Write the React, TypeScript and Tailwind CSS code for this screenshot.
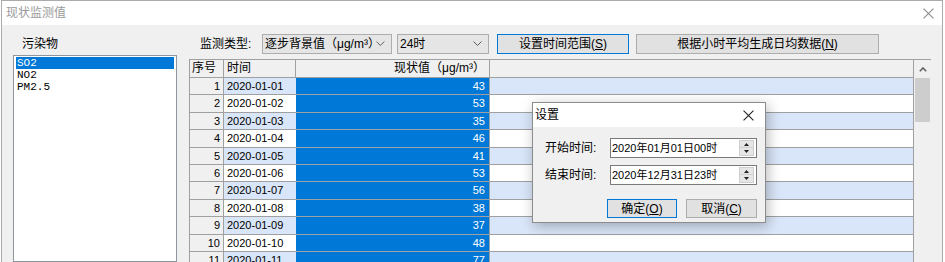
import React from "react";

const sans = "font-['Liberation_Sans','Noto_Sans_CJK_SC',sans-serif]";

const rows = [
    { n: 1, d: "2020-01-01", v: 43 },
    { n: 2, d: "2020-01-02", v: 53 },
    { n: 3, d: "2020-01-03", v: 35 },
    { n: 4, d: "2020-01-04", v: 46 },
    { n: 5, d: "2020-01-05", v: 41 },
    { n: 6, d: "2020-01-06", v: 53 },
    { n: 7, d: "2020-01-07", v: 56 },
    { n: 8, d: "2020-01-08", v: 38 },
    { n: 9, d: "2020-01-09", v: 37 },
    { n: 10, d: "2020-01-10", v: 48 },
    { n: 11, d: "2020-01-11", v: 77 },
];

function CloseX({ color, size }: { color: string; size: number }) {
    return (
        <svg width={size} height={size} viewBox="0 0 10 10">
            <path d="M0.5 0.5 L9.5 9.5 M9.5 0.5 L0.5 9.5" stroke={color} strokeWidth="1" fill="none" />
        </svg>
    );
}

function Chevron() {
    return (
        <svg width="9" height="5" viewBox="0 0 9 5">
            <polyline points="0.5,0.5 4.5,4.5 8.5,0.5" stroke="#5a5a5a" strokeWidth="1" fill="none" />
        </svg>
    );
}

function Combo({ w, text }: { w: string; text: string }) {
    return (
        <div className={`${w} h-[20px] border border-[#adadad] bg-[#e5e5e5] flex items-center justify-between pl-[2px] pr-[6px] text-[12px] leading-[18px]`}>
            <span>{text}</span>
            <Chevron />
        </div>
    );
}

function Spinner() {
    return (
        <div className="w-[15px] h-[16px] flex flex-col mr-[2px]">
            <div className="h-[8px] bg-[#e6e6e6] border border-[#cfcfcf] flex items-center justify-center">
                <svg width="5" height="3" viewBox="0 0 5 3">
                    <polygon points="2.5,0 5,3 0,3" fill="#202020" />
                </svg>
            </div>
            <div className="h-[8px] bg-[#e6e6e6] border border-[#cfcfcf] border-t-0 flex items-center justify-center">
                <svg width="5" height="3" viewBox="0 0 5 3">
                    <polygon points="0,0 5,0 2.5,3" fill="#202020" />
                </svg>
            </div>
        </div>
    );
}

function TimeField({ label, value }: { label: string; value: string }) {
    return (
        <div className="flex items-center h-[20px]">
            <div className="w-[65px] text-[12px] leading-[16px]">{label}</div>
            <div className="w-[147px] h-[20px] border border-[#7a7a7a] bg-white flex items-center justify-between pl-[1px]">
                <span className="text-[11px] leading-[16px]">{value}</span>
                <Spinner />
            </div>
        </div>
    );
}

export default function App() {
    return (
        <div className={`w-[945px] h-[262px] overflow-hidden bg-white relative text-black ${sans}`}>
            <div className="ml-[1px] w-[942px] h-[262px] border-x border-t border-[#ababab] flex flex-col">
                {/* title bar */}
                <div className="h-[24px] bg-white flex items-center justify-between pl-[4px] pr-[8px]">
                    <span className="text-[12px] leading-[16px] text-[#9a9a9a]">现状监测值</span>
                    <CloseX color="#8a8a8a" size={11} />
                </div>

                <div className="flex-1 min-h-0 bg-[#f0f0f0] flex">
                    {/* pollutant list */}
                    <div className="w-[187px] pl-[11px] pt-[11px] flex flex-col">
                        <div className="h-[16px] pl-[9px] text-[12px] leading-[16px]">污染物</div>
                        <div className="mt-[3px] w-[164px] flex-1 border border-[#8f959c] bg-white px-[2px] pt-[1px] font-['Liberation_Mono',monospace] text-[11px] leading-[12px]">
                            <div className="h-[12px] pl-[1px] bg-[#0078d7] text-white">SO2</div>
                            <div className="h-[12px] pl-[1px]">NO2</div>
                            <div className="h-[12px] pl-[1px]">PM2.5</div>
                        </div>
                    </div>

                    {/* main area */}
                    <div className="flex-1 pt-[8px] flex flex-col min-h-0">
                        <div className="h-[21px] flex items-center pl-[11px]">
                            <div className="w-[62px] text-[12px] leading-[16px]">监测类型:</div>
                            <Combo w="w-[130px]" text="逐步背景值（μg/m³）" />
                            <div className="w-[5px]" />
                            <Combo w="w-[92px]" text="24时" />
                            <button className="ml-[8px] w-[132px] h-[20px] border border-[#0078d7] bg-[#e1e1e1] text-[12px] leading-[16px]">
                                设置时间范围(<span className="underline">S</span>)
                            </button>
                            <button className="ml-[7px] w-[243px] h-[20px] border border-[#adadad] bg-[#e1e1e1] text-[12px] leading-[16px]">
                                根据小时平均生成日均数据(<span className="underline">N</span>)
                            </button>
                        </div>

                        <div className="mt-[5px] w-[742px] flex-1 min-h-0 overflow-hidden border-l border-t border-[#a0a0a0] flex">
                            <div className="w-[724px] flex flex-col">
                                <div className="h-[18px] shrink-0 flex bg-[#f0f0f0] border-b border-[#a0a0a0] text-[12px] leading-[16px]">
                                    <div className="w-[34px] border-r border-[#a0a0a0] pl-[2px]">序号</div>
                                    <div className="w-[72px] border-r border-[#a0a0a0] pl-[3px]">时间</div>
                                    <div className="w-[194px] border-r border-[#a0a0a0] text-right pr-[4px]">现状值（μg/m³）</div>
                                    <div className="flex-1 border-r border-[#a0a0a0]" />
                                </div>
                                {rows.map((r, i) => {
                                    const bg = i % 2 === 0 ? "bg-[#d9e5f8]" : "bg-white";
                                    return (
                                        <div key={r.n} className="h-[17.4px] shrink-0 flex border-b border-[#a0a0a0] text-[11px] leading-[16px]">
                                            <div className="w-[34px] bg-[#f0f0f0] border-r border-[#a0a0a0] text-right pr-[3px]">{r.n}</div>
                                            <div className={`w-[72px] ${bg} pl-[3px]`}>{r.d}</div>
                                            <div className="w-[194px] bg-[#0078d7] text-white border-r border-[#a0a0a0] text-right pr-[4px]">{r.v}</div>
                                            <div className={`flex-1 ${bg} border-r border-[#a0a0a0]`} />
                                        </div>
                                    );
                                })}
                            </div>
                            <div className="w-[17px] bg-[#f0f0f0] flex flex-col">
                                <div className="h-[18px] flex items-center justify-center">
                                    <svg width="8" height="5" viewBox="0 0 8 5">
                                        <polyline points="0.8,4.2 4,1 7.2,4.2" stroke="#606060" strokeWidth="1.6" fill="none" />
                                    </svg>
                                </div>
                                <div className="h-[44px] mx-[1px] bg-[#cdcdcd]" />
                            </div>
                        </div>
                    </div>
                </div>
            </div>

            {/* settings dialog */}
            <div className="absolute left-[532px] top-[102px] w-[234px] h-[121px] border border-[#8c8c8c] bg-[#f0f0f0] shadow-[2px_3px_12px_rgba(0,0,0,0.28)] flex flex-col">
                <div className="h-[24px] bg-white flex items-center justify-between pl-[2px] pr-[11px]">
                    <span className="text-[12px] leading-[16px]">设置</span>
                    <CloseX color="#222" size={11} />
                </div>
                <div className="pt-[11px] pl-[12px] flex flex-col">
                    <TimeField label="开始时间:" value="2020年01月01日00时" />
                    <div className="h-[7px]" />
                    <TimeField label="结束时间:" value="2020年12月31日23时" />
                    <div className="mt-[14px] ml-[62px] flex gap-[9px]">
                        <button className="w-[70px] h-[19px] border border-[#0078d7] bg-[#e1e1e1] text-[12px] leading-[16px]">
                            确定(<span className="underline">O</span>)
                        </button>
                        <button className="w-[71px] h-[19px] border border-[#adadad] bg-[#e1e1e1] text-[12px] leading-[16px]">
                            取消(<span className="underline">C</span>)
                        </button>
                    </div>
                </div>
            </div>
        </div>
    );
}
